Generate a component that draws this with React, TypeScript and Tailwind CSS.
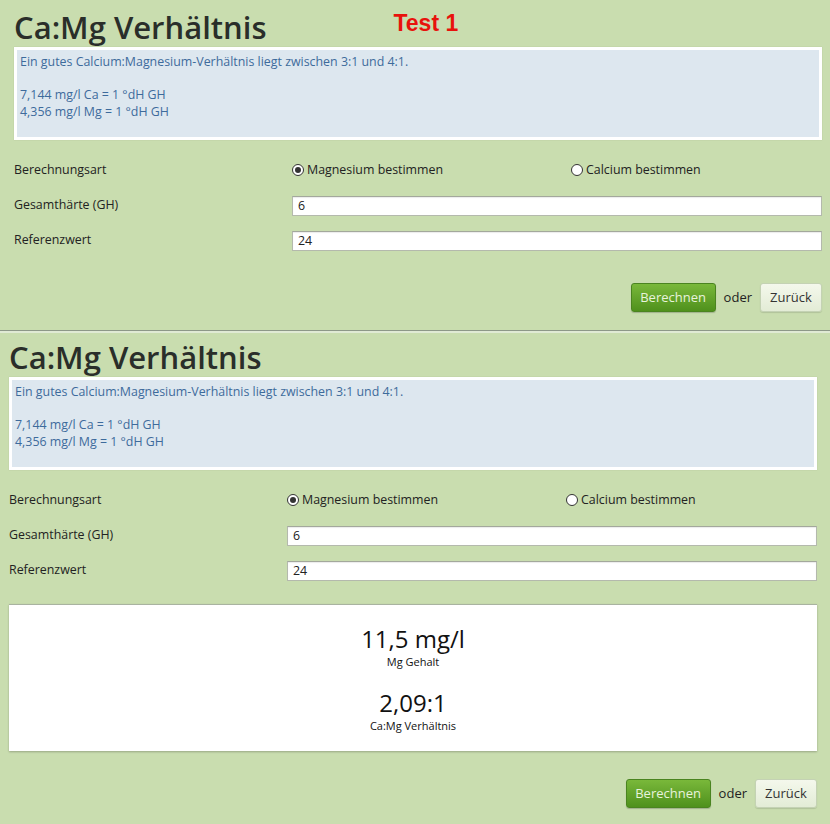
import type React from "react"

const font = { fontFamily: '"Open Sans", "Noto Sans", sans-serif' }

const Radio: React.FC<{ checked?: boolean; label: string }> = ({ checked, label }) => (
  <label className="flex items-center gap-[3px] text-[12.4px] text-[#222]">
    <span className="w-[12px] h-[12px] rounded-full border border-[#333] bg-white flex items-center justify-center">
      {checked && <span className="w-[6px] h-[6px] rounded-full bg-[#333]" />}
    </span>
    {label}
  </label>
)

const Field: React.FC<{ value: string }> = ({ value }) => (
  <div className="flex-1 h-[20px] bg-white border border-[#b4b9ad] border-t-[#a3a89c] shadow-[inset_0_1px_1px_rgba(0,0,0,0.08)] px-[5px] text-[12.4px] leading-[18px] text-[#222]">
    {value}
  </div>
)

const Row: React.FC<{ label: string; children: React.ReactNode }> = ({ label, children }) => (
  <div className="h-[35px] flex items-center text-[12.4px] text-[#222]">
    <div className="w-[278px]">{label}</div>
    {children}
  </div>
)

const Buttons: React.FC = () => (
  <div className="flex items-center justify-end gap-[8px]">
    <button className="h-[29px] w-[85px] rounded-[3px] border border-[#4a8420] bg-gradient-to-b from-[#79b83a] to-[#4f911c] text-[13px] text-[#e8f3dc] shadow-[0_1px_1px_rgba(0,0,0,0.2)]">
      Berechnen
    </button>
    <span className="text-[13px] text-[#222]">oder</span>
    <button className="h-[29px] w-[62px] rounded-[3px] border border-[#c4d2b4] bg-gradient-to-b from-[#f4f8ec] to-[#e3ecd6] text-[13px] text-[#333] shadow-[0_1px_1px_rgba(0,0,0,0.12)]">
      Zurück
    </button>
  </div>
)

const Panel: React.FC<{ test?: boolean; result?: boolean }> = ({ test, result }) => (
  <div className={test ? "pl-[14px] pr-[8px] pt-[9px] pb-[18px]" : "pl-[9px] pr-[13px] pt-[6px] pb-[17px]"}>
    <div className="flex items-center h-[36px]">
      <h1 className="text-[31px] leading-[36px] font-semibold text-[#2a2e2a]">Ca:Mg Verhältnis</h1>
      {test && (
        <span className="ml-[127px] -mt-[8px] text-[23px] font-bold text-[#e8120c]" style={{ fontFamily: '"Liberation Sans", Arial, sans-serif' }}>
          Test 1
        </span>
      )}
    </div>
    <div className="mt-[2px] h-[93px] border-[3px] border-white bg-[#dde7ef] px-[3px] pt-[4px] text-[12.4px] leading-[16.5px] text-[#3d6b9c] shadow-[0_0_1px_rgba(0,0,0,0.15)]">
      <div>Ein gutes Calcium:Magnesium-Verhältnis liegt zwischen 3:1 und 4:1.</div>
      <div className="h-[16.5px]" />
      <div>7,144 mg/l Ca = 1 °dH GH</div>
      <div>4,356 mg/l Mg = 1 °dH GH</div>
    </div>
    <div className="mt-[13px]">
      <Row label="Berechnungsart">
        <div className="flex-1 flex">
          <div className="w-[279px]">
            <Radio checked label="Magnesium bestimmen" />
          </div>
          <Radio label="Calcium bestimmen" />
        </div>
      </Row>
      <Row label="Gesamthärte (GH)">
        <Field value="6" />
      </Row>
      <Row label="Referenzwert">
        <Field value="24" />
      </Row>
    </div>
    {result ? (
      <>
        <div className="mt-[16px] w-full h-[147px] bg-white border-t border-[#a9b3a0] shadow-[0_1px_2px_rgba(0,0,0,0.25)] flex flex-col items-center pt-[21px] text-[#111]">
          <div className="text-[24px] leading-[26px]">11,5 mg/l</div>
          <div className="text-[11px] leading-[13px] mt-[3px]">Mg Gehalt</div>
          <div className="text-[24px] leading-[26px] mt-[22px]">2,09:1</div>
          <div className="text-[11px] leading-[13px] mt-[3px]">Ca:Mg Verhältnis</div>
        </div>
        <div className="mt-[28px]">
          <Buttons />
        </div>
      </>
    ) : (
      <div className="mt-[25px]">
        <Buttons />
      </div>
    )}
  </div>
)

export default function App() {
  return (
    <div className="w-[830px] h-[824px] overflow-hidden bg-[#c9ddaf]" style={font}>
      <Panel test />
      <div className="h-[1px] bg-[#8d9888]" />
      <div className="h-[2px] bg-[#e0ead4]" />
      <Panel result />
    </div>
  )
}
